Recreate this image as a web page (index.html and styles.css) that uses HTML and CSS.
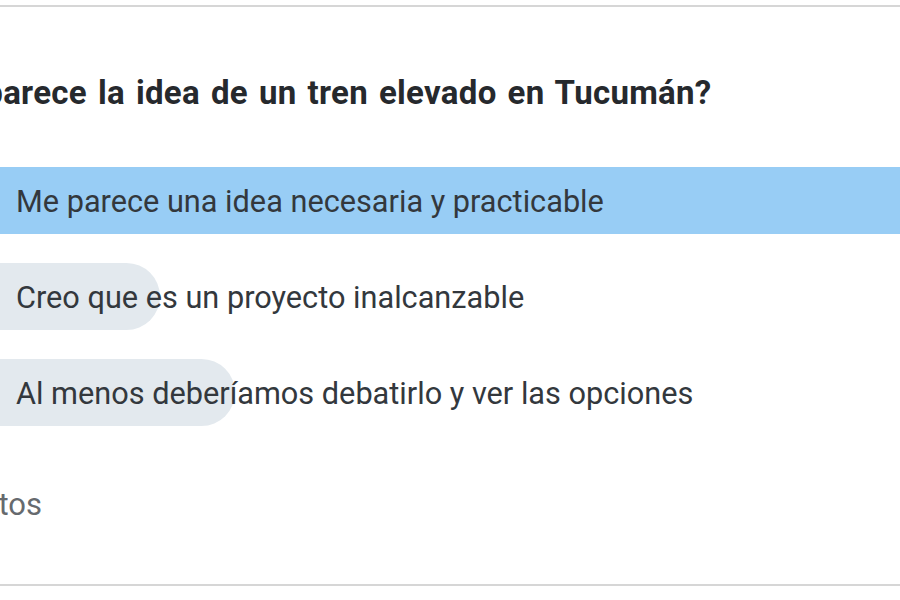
FILE: index.html
```html
<!DOCTYPE html>
<html lang="es">
<head>
    <meta charset="utf-8">
    <meta name="viewport" content="width=device-width, initial-scale=1.0" />
    <title>Encuesta</title>
    <link rel="stylesheet" href="styles.css">
</head>
<body>
    <div class="poll-card">
        <div class="poll-question">¿Qué te parece la idea de un tren elevado en Tucumán?</div>

        <div class="poll-options">
            <div class="poll-option">
                <div class="poll-bar winner" style="width: 100%"></div>
                <span class="poll-label">Me parece una idea necesaria y practicable</span>
            </div>
            <div class="poll-option">
                <div class="poll-bar" style="width: 180px"></div>
                <span class="poll-label">Creo que es un proyecto inalcanzable</span>
            </div>
            <div class="poll-option">
                <div class="poll-bar" style="width: 255px"></div>
                <span class="poll-label">Al menos deberíamos debatirlo y ver las opciones</span>
            </div>
        </div>

        <div class="poll-footer"><span class="poll-votes">votos</span></div>
    </div>
</body>
</html>
```

FILE: styles.css
```css
* {
    padding: 0;
    margin: 0;
    box-sizing: border-box;
}

body {
    background: #ffffff;
    font-family: Roboto, "Liberation Sans", sans-serif;
    overflow: hidden;
    width: 900px;
    height: 600px;
}

.poll-card {
    margin-top: 5px;
    height: 581px;
    border-top: 2px solid #d6d6d6;
    border-bottom: 2px solid #d6d6d6;
    padding-top: 67px;
    overflow: hidden;
}

.poll-question {
    font-size: 33px;
    line-height: 38px;
    font-weight: 700;
    letter-spacing: 0.3px;
    word-spacing: 2.5px;
    color: #26292d;
    white-space: nowrap;
    margin-left: -144px;
}

.poll-options {
    display: flex;
    flex-direction: column;
    gap: 29px;
    margin-top: 55px;
    margin-left: -20px;
}

.poll-option {
    position: relative;
    height: 67px;
    display: flex;
    align-items: center;
}

/* result bar sits behind the label */
.poll-bar {
    position: absolute;
    top: 0;
    left: 0;
    height: 100%;
    border-radius: 0 34px 34px 0;
    background: #e3e9ee;
}

.poll-bar.winner {
    background: #98cdf5;
    border-radius: 10px 0 0 10px;
}

.poll-label {
    position: relative;
    padding-left: 36px;
    padding-top: 4px;
    font-size: 30.7px;
    line-height: 30.7px;
    color: #33383d;
    white-space: nowrap;
}

.poll-footer {
    margin-top: 64px;
    font-size: 31px;
    line-height: 30px;
    color: #666a6e;
    white-space: nowrap;
}

.poll-votes {
    display: inline-block;
    margin-left: -34px;
}
```
